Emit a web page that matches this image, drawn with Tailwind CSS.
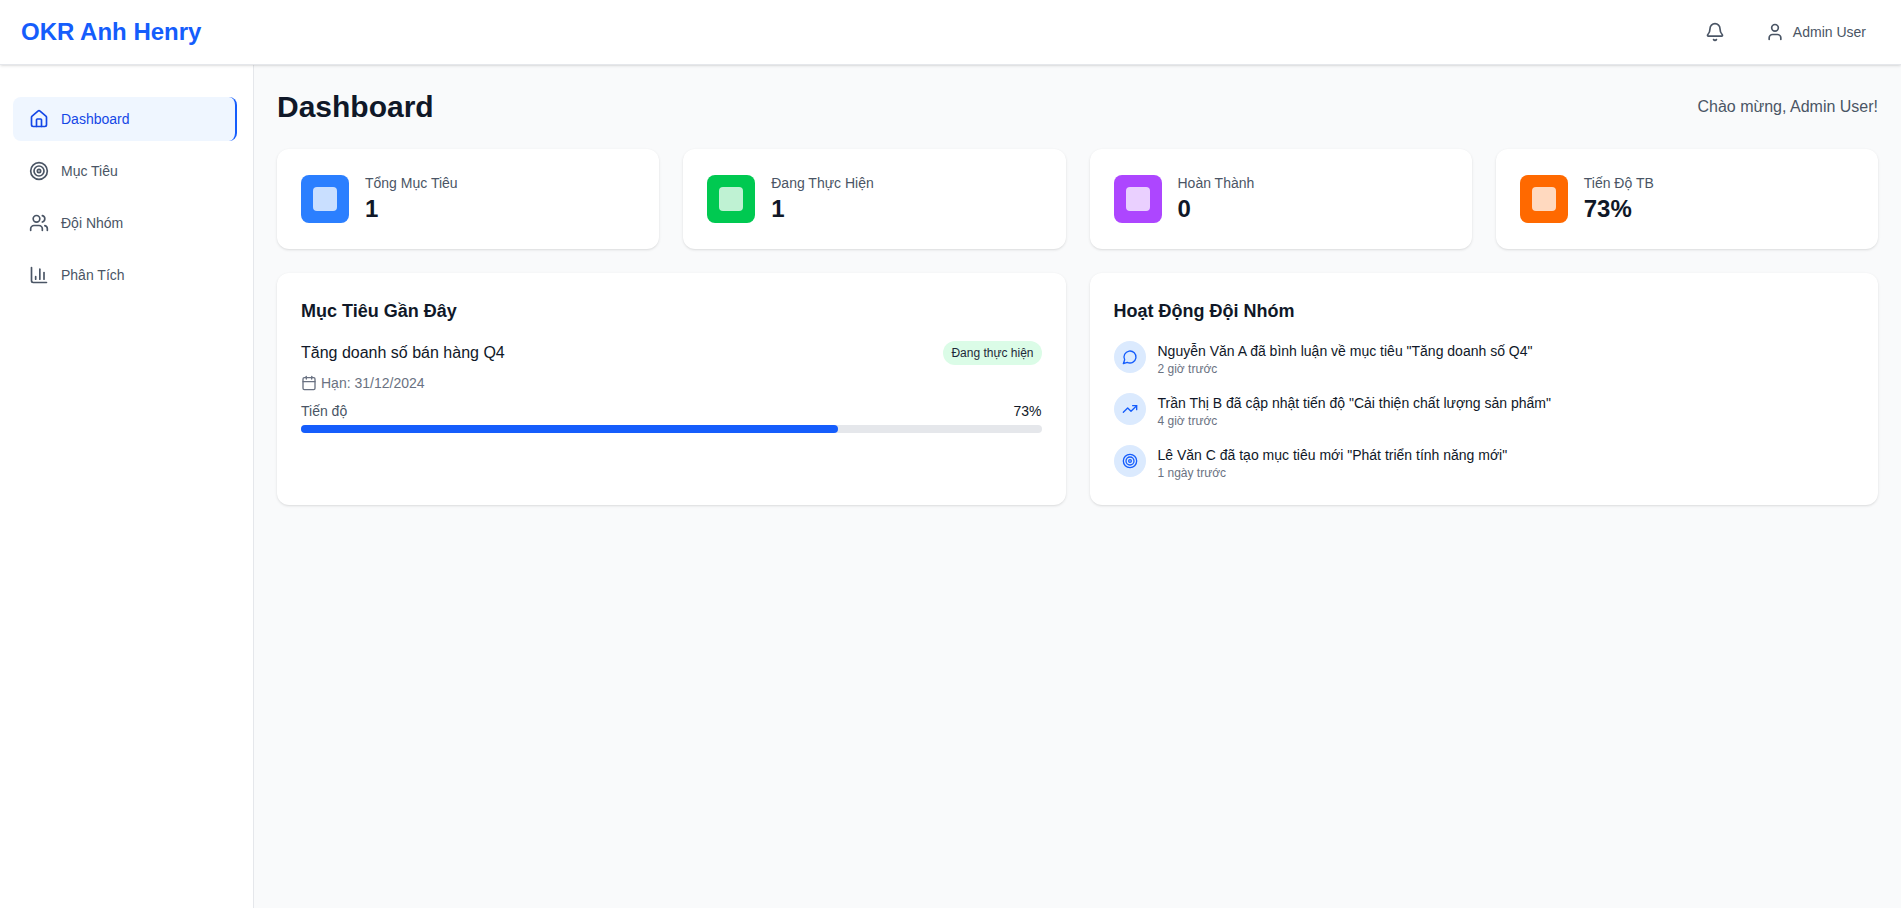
<!DOCTYPE html>
<html lang="vi">
<head>
    <meta charset="UTF-8">
    <meta name="viewport" content="width=device-width, initial-scale=1.0">
    <title>OKR Anh Henry</title>
    <script src="https://cdn.jsdelivr.net/npm/@tailwindcss/browser@4"></script>
</head>
<body class="bg-gray-50 font-['Liberation_Sans',Arial,sans-serif] text-gray-900">
    <!-- Header -->
    <header class="h-[65px] bg-white border-b border-gray-200 shadow-sm flex items-center justify-between pl-[21px] pr-[23px] relative">
        <h1 class="text-2xl font-bold text-blue-600">OKR Anh Henry</h1>
        <div class="flex items-center gap-5">
            <button class="p-2 text-gray-600">
                <svg class="w-5 h-5" viewBox="0 0 24 24" fill="none" stroke="currentColor" stroke-width="2" stroke-linecap="round" stroke-linejoin="round"><path d="M10.268 21a2 2 0 0 0 3.464 0"/><path d="M3.262 15.326A1 1 0 0 0 4 17h16a1 1 0 0 0 .74-1.673C19.41 13.956 18 12.499 18 8A6 6 0 0 0 6 8c0 4.499-1.411 5.956-2.738 7.326"/></svg>
            </button>
            <button class="flex items-center gap-2 px-3 py-2 text-sm text-gray-600">
                <svg class="w-5 h-5" viewBox="0 0 24 24" fill="none" stroke="currentColor" stroke-width="2" stroke-linecap="round" stroke-linejoin="round"><path d="M19 21v-2a4 4 0 0 0-4-4H9a4 4 0 0 0-4 4v2"/><circle cx="12" cy="7" r="4"/></svg>
                <span>Admin User</span>
            </button>
        </div>
    </header>

    <div class="flex h-[843px]">
        <!-- Sidebar -->
        <aside class="w-[254px] shrink-0 bg-white border-r border-gray-200 pt-8 pl-[13px] pr-4">
            <nav class="flex flex-col gap-2 text-sm text-gray-600">
                <a class="h-11 flex items-center gap-3 px-4 rounded-lg bg-blue-50 text-blue-700 border-r-2 border-blue-600">
                    <svg class="w-5 h-5" viewBox="0 0 24 24" fill="none" stroke="currentColor" stroke-width="2" stroke-linecap="round" stroke-linejoin="round"><path d="M15 21v-8a1 1 0 0 0-1-1h-4a1 1 0 0 0-1 1v8"/><path d="M3 10a2 2 0 0 1 .709-1.528l7-5.999a2 2 0 0 1 2.582 0l7 5.999A2 2 0 0 1 21 10v9a2 2 0 0 1-2 2H5a2 2 0 0 1-2-2z"/></svg>
                    Dashboard
                </a>
                <a class="h-11 flex items-center gap-3 px-4 rounded-lg">
                    <svg class="w-5 h-5" viewBox="0 0 24 24" fill="none" stroke="currentColor" stroke-width="2" stroke-linecap="round" stroke-linejoin="round"><circle cx="12" cy="12" r="10"/><circle cx="12" cy="12" r="6"/><circle cx="12" cy="12" r="2"/></svg>
                    Mục Tiêu
                </a>
                <a class="h-11 flex items-center gap-3 px-4 rounded-lg">
                    <svg class="w-5 h-5" viewBox="0 0 24 24" fill="none" stroke="currentColor" stroke-width="2" stroke-linecap="round" stroke-linejoin="round"><path d="M16 21v-2a4 4 0 0 0-4-4H6a4 4 0 0 0-4 4v2"/><path d="M16 3.128a4 4 0 0 1 0 7.744"/><path d="M22 21v-2a4 4 0 0 0-3-3.87"/><circle cx="9" cy="7" r="4"/></svg>
                    Đội Nhóm
                </a>
                <a class="h-11 flex items-center gap-3 px-4 rounded-lg">
                    <svg class="w-5 h-5" viewBox="0 0 24 24" fill="none" stroke="currentColor" stroke-width="2" stroke-linecap="round" stroke-linejoin="round"><path d="M3 3v16a2 2 0 0 0 2 2h16"/><path d="M18 17V9"/><path d="M13 17V5"/><path d="M8 17v-3"/></svg>
                    Phân Tích
                </a>
            </nav>
        </aside>

        <!-- Main -->
        <main class="flex-1 pt-6 pl-[23px] pr-[23px]">
            <div class="flex items-center justify-between mb-6">
                <h2 class="text-3xl font-bold">Dashboard</h2>
                <p class="text-gray-600">Chào mừng, Admin User!</p>
            </div>

            <!-- Stat cards -->
            <div class="grid grid-cols-4 gap-6 mb-6">
                <div class="bg-white rounded-xl shadow-sm p-6 flex items-center gap-4">
                    <div class="w-12 h-12 rounded-lg bg-blue-500 flex items-center justify-center"><div class="w-6 h-6 rounded bg-white/75"></div></div>
                    <div>
                        <p class="text-sm text-gray-600">Tổng Mục Tiêu</p>
                        <p class="text-2xl font-bold">1</p>
                    </div>
                </div>
                <div class="bg-white rounded-xl shadow-sm p-6 flex items-center gap-4">
                    <div class="w-12 h-12 rounded-lg bg-green-500 flex items-center justify-center"><div class="w-6 h-6 rounded bg-white/75"></div></div>
                    <div>
                        <p class="text-sm text-gray-600">Đang Thực Hiện</p>
                        <p class="text-2xl font-bold">1</p>
                    </div>
                </div>
                <div class="bg-white rounded-xl shadow-sm p-6 flex items-center gap-4">
                    <div class="w-12 h-12 rounded-lg bg-purple-500 flex items-center justify-center"><div class="w-6 h-6 rounded bg-white/75"></div></div>
                    <div>
                        <p class="text-sm text-gray-600">Hoàn Thành</p>
                        <p class="text-2xl font-bold">0</p>
                    </div>
                </div>
                <div class="bg-white rounded-xl shadow-sm p-6 flex items-center gap-4">
                    <div class="w-12 h-12 rounded-lg bg-orange-500 flex items-center justify-center"><div class="w-6 h-6 rounded bg-white/75"></div></div>
                    <div>
                        <p class="text-sm text-gray-600">Tiến Độ TB</p>
                        <p class="text-2xl font-bold">73%</p>
                    </div>
                </div>
            </div>

            <div class="grid grid-cols-2 gap-6">
                <!-- Recent goals -->
                <div class="bg-white rounded-xl shadow-sm p-6">
                    <h3 class="text-lg font-bold mb-4">Mục Tiêu Gần Đây</h3>
                    <div class="flex items-center justify-between mb-2">
                        <p>Tăng doanh số bán hàng Q4</p>
                        <span class="px-2 py-1 rounded-full bg-green-100 text-xs text-gray-800">Đang thực hiện</span>
                    </div>
                    <div class="flex items-center gap-1 text-sm text-gray-500 mb-2">
                        <svg class="w-4 h-4" viewBox="0 0 24 24" fill="none" stroke="currentColor" stroke-width="2" stroke-linecap="round" stroke-linejoin="round"><path d="M8 2v4"/><path d="M16 2v4"/><rect width="18" height="18" x="3" y="4" rx="2"/><path d="M3 10h18"/></svg>
                        Hạn: 31/12/2024
                    </div>
                    <div class="flex justify-between text-sm mb-1">
                        <span class="text-gray-600">Tiến độ</span>
                        <span>73%</span>
                    </div>
                    <div class="h-2 rounded-full bg-gray-200">
                        <div class="h-2 rounded-full bg-blue-600" style="width: 72.5%"></div>
                    </div>
                </div>

                <!-- Team activity -->
                <div class="bg-white rounded-xl shadow-sm p-6">
                    <h3 class="text-lg font-bold mb-4">Hoạt Động Đội Nhóm</h3>
                    <div class="flex flex-col gap-4">
                        <div class="flex items-start gap-3">
                            <div class="w-8 h-8 rounded-full bg-blue-100 text-blue-600 flex items-center justify-center">
                                <svg class="w-4 h-4" viewBox="0 0 24 24" fill="none" stroke="currentColor" stroke-width="2" stroke-linecap="round" stroke-linejoin="round"><path d="M7.9 20A9 9 0 1 0 4 16.1L2 22Z"/></svg>
                            </div>
                            <div>
                                <p class="text-sm">Nguyễn Văn A đã bình luận về mục tiêu "Tăng doanh số Q4"</p>
                                <p class="text-xs text-gray-500">2 giờ trước</p>
                            </div>
                        </div>
                        <div class="flex items-start gap-3">
                            <div class="w-8 h-8 rounded-full bg-blue-100 text-blue-600 flex items-center justify-center">
                                <svg class="w-4 h-4" viewBox="0 0 24 24" fill="none" stroke="currentColor" stroke-width="2" stroke-linecap="round" stroke-linejoin="round"><path d="M16 7h6v6"/><path d="m22 7-8.5 8.5-5-5L2 17"/></svg>
                            </div>
                            <div>
                                <p class="text-sm">Trần Thị B đã cập nhật tiến độ "Cải thiện chất lượng sản phẩm"</p>
                                <p class="text-xs text-gray-500">4 giờ trước</p>
                            </div>
                        </div>
                        <div class="flex items-start gap-3">
                            <div class="w-8 h-8 rounded-full bg-blue-100 text-blue-600 flex items-center justify-center">
                                <svg class="w-4 h-4" viewBox="0 0 24 24" fill="none" stroke="currentColor" stroke-width="2" stroke-linecap="round" stroke-linejoin="round"><circle cx="12" cy="12" r="10"/><circle cx="12" cy="12" r="6"/><circle cx="12" cy="12" r="2"/></svg>
                            </div>
                            <div>
                                <p class="text-sm">Lê Văn C đã tạo mục tiêu mới "Phát triển tính năng mới"</p>
                                <p class="text-xs text-gray-500">1 ngày trước</p>
                            </div>
                        </div>
                    </div>
                </div>
            </div>
        </main>
    </div>
</body>
</html>
